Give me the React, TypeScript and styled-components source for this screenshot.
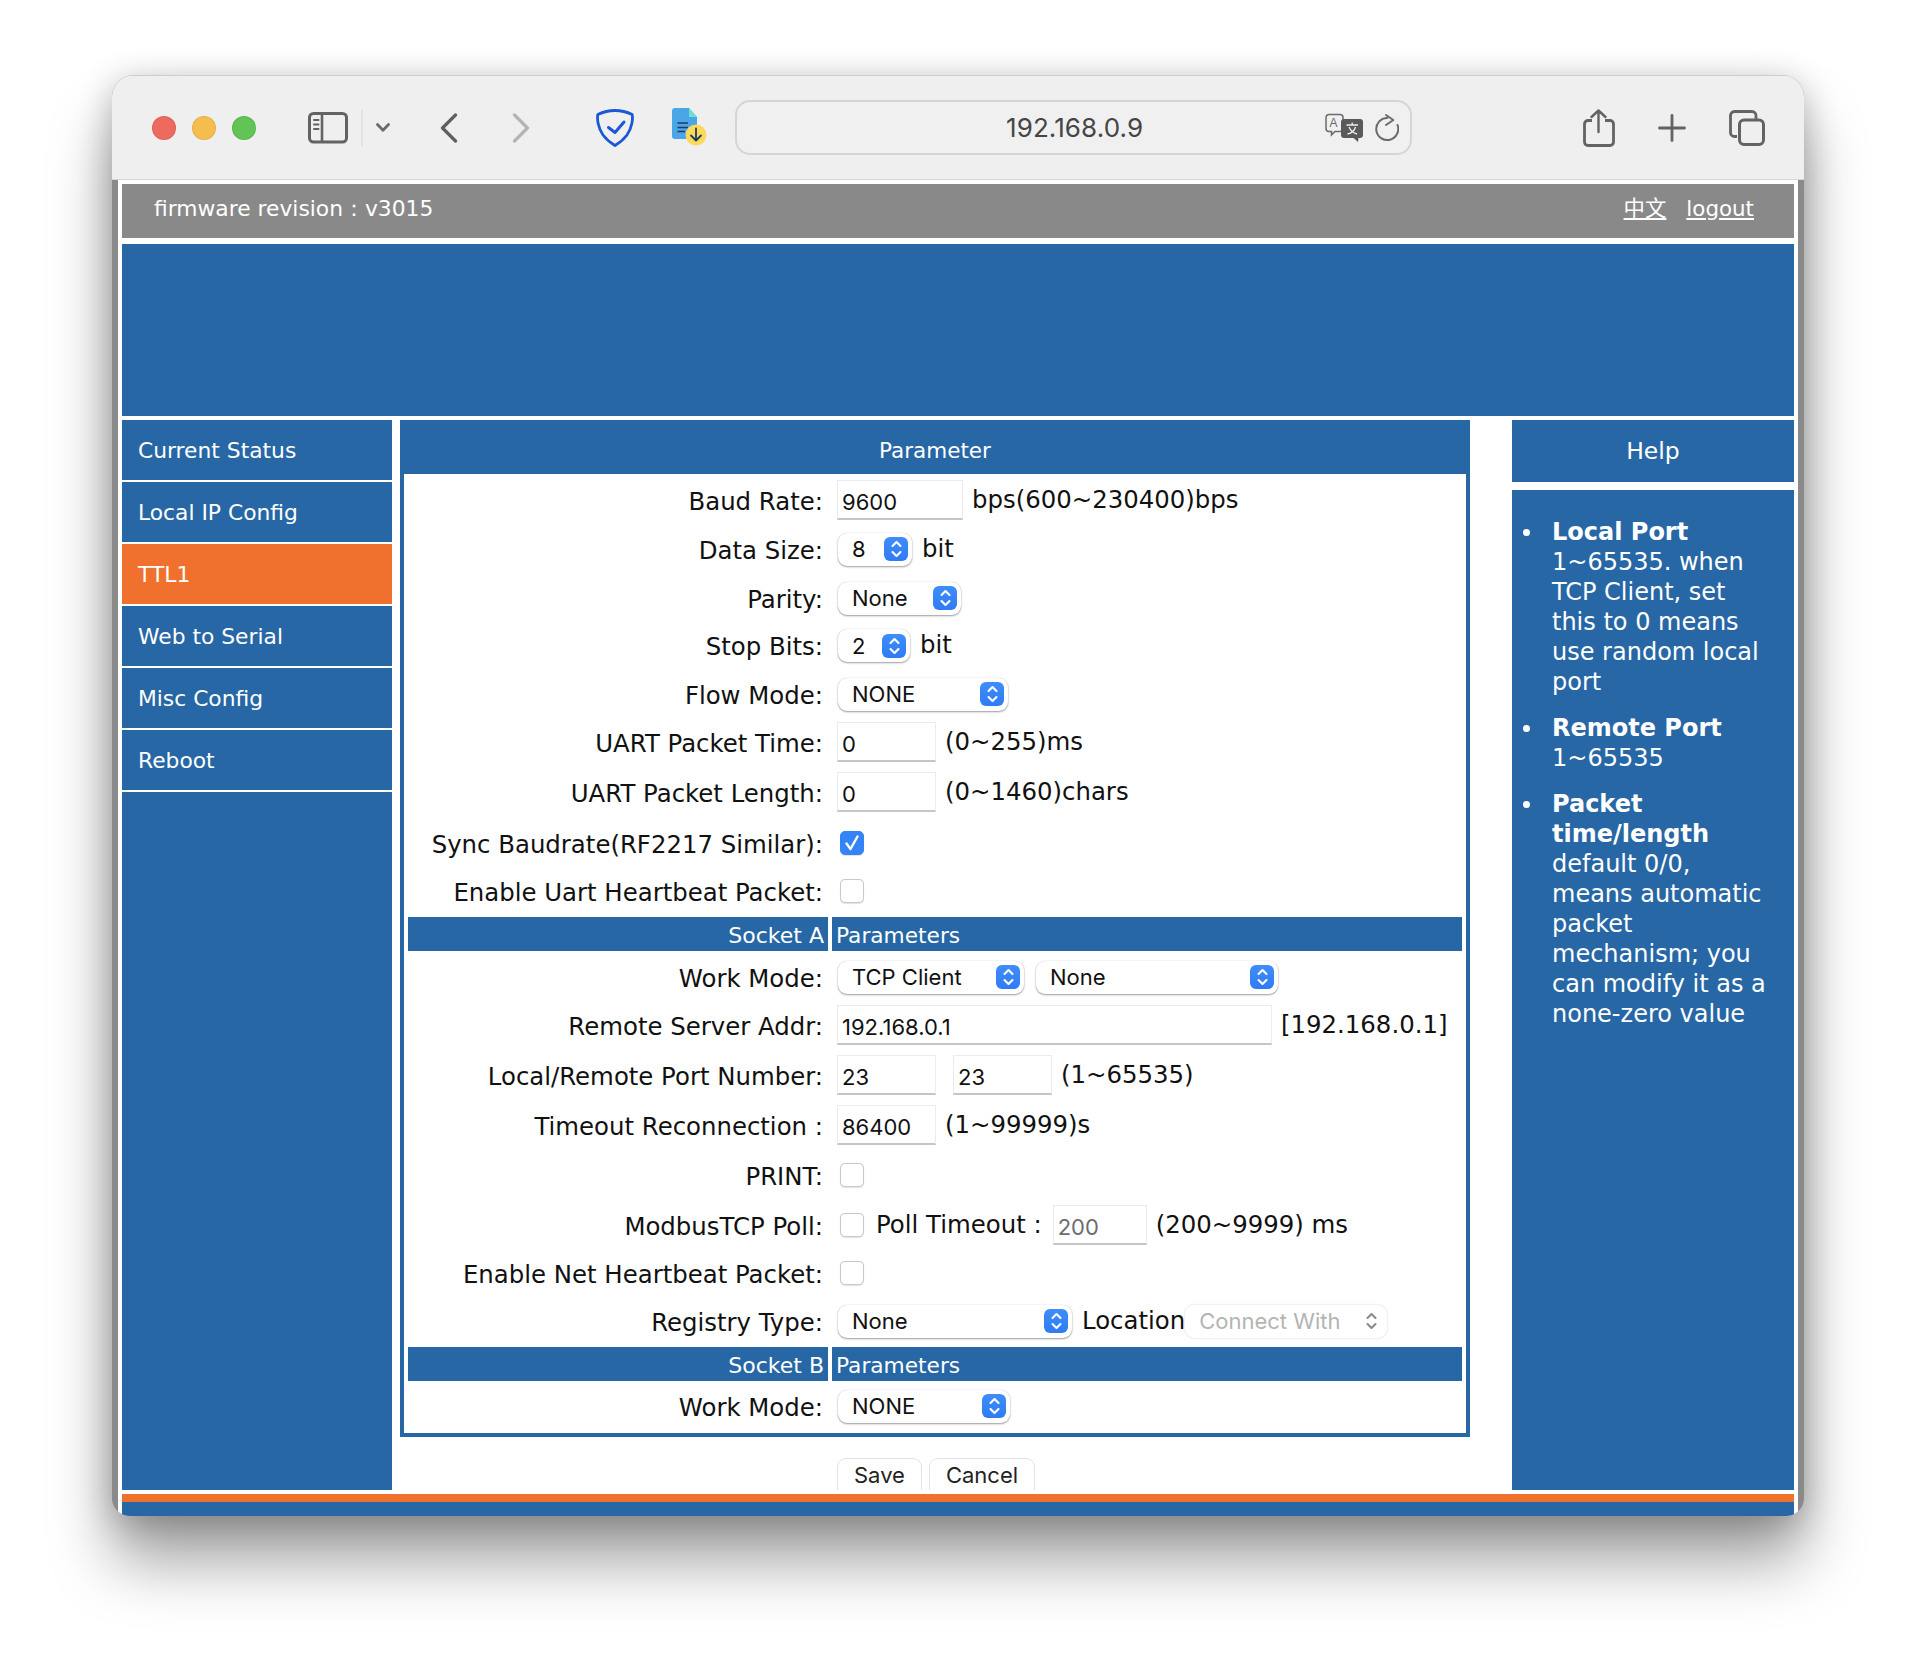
import React from "react";
import styled, { createGlobalStyle } from "styled-components";

const BLUE = "#2767a5";
const ORANGE = "#f0702d";
const FONT = `"DejaVu Sans", Verdana, sans-serif`;
const SYSTEM_FONT = `Inter, "Liberation Sans", sans-serif`;

const GlobalStyle = createGlobalStyle`
  html, body {
    margin: 0;
    background: #fff;
  }
  body {
    font-family: ${FONT};
  }
  #root {
    padding: 75px 112px 148px;
    width: 1692px;
  }
`;

const Window = styled.div`
  height: 1441px;
  border-radius: 22px 22px 18px 18px;
  overflow: hidden;
  background: #8a8a8a;
  box-shadow: 0 46px 62px rgba(0, 0, 0, 0.36), 0 6px 34px rgba(0, 0, 0, 0.24);
  display: flex;
  flex-direction: column;
`;

const Toolbar = styled.header`
  height: 105px;
  box-sizing: border-box;
  background: #efefef;
  border-top: 1px solid #cdcdcd;
  border-bottom: 1px solid #d6d6d6;
  display: flex;
  align-items: center;
  padding: 0 39px 0 40px;
  flex: none;
`;

const Lights = styled.div`
  display: flex;
  gap: 16px;
  margin-right: 52px;
`;

const Light = styled.span<{ $color: string }>`
  width: 24px;
  height: 24px;
  border-radius: 50%;
  background: ${(p) => p.$color};
  box-shadow: inset 0 0 0 1px rgba(0, 0, 0, 0.08);
`;

const ToolIcon = styled.svg<{ $gap?: number }>`
  flex: none;
  display: block;
  margin-right: ${(p) => p.$gap ?? 0}px;
`;

const ToolDivider = styled.span`
  width: 2px;
  height: 36px;
  background: #e2e2e2;
  margin: 0 13px;
`;

const UrlBar = styled.div`
  width: 677px;
  height: 55px;
  box-sizing: border-box;
  border: 2px solid #d5d5d5;
  border-radius: 15px;
  background: #f0f0f0;
  display: flex;
  align-items: center;
  padding-left: 269px;
  margin: 0 171px 0 28px;
  flex: none;
`;

const UrlText = styled.span`
  font-family: ${SYSTEM_FONT};
  font-size: 26px;
  letter-spacing: 0.1px;
  color: #454545;
  width: 180px;
  margin-right: 139px;
`;

const Frame = styled.div`
  flex: 1;
  min-height: 0;
  margin: 0 6px;
  padding: 4px 4px 0;
  background: #fff;
  display: flex;
  flex-direction: column;
`;

const TopBar = styled.div`
  height: 54px;
  box-sizing: border-box;
  flex: none;
  background: #898989;
  color: #fff;
  font-size: 21.8px;
  display: flex;
  align-items: center;
  justify-content: space-between;
  padding: 0 40px 5px 32px;
`;

const TopLinks = styled.div`
  display: flex;
  align-items: baseline;
  gap: 20px;
`;

const TopLink = styled.a`
  color: #fff;
  text-decoration: underline;
  font-family: ${FONT}, "Noto Sans CJK SC";
  font-size: 21.4px;
  line-height: 26px;
`;

const Banner = styled.div`
  height: 172px;
  flex: none;
  margin-top: 6px;
  background: ${BLUE};
`;

const Columns = styled.div`
  height: 1070px;
  flex: none;
  margin-top: 4px;
  display: flex;
`;

const Nav = styled.nav`
  width: 270px;
  flex: none;
  background: ${BLUE};
`;

const NavItem = styled.div<{ $active?: boolean }>`
  height: 60px;
  border-bottom: 2px solid #fff;
  display: flex;
  align-items: center;
  padding-left: 16px;
  color: #fff;
  font-size: 21.8px;
  background: ${(p) => (p.$active ? ORANGE : BLUE)};
`;

const Center = styled.main`
  width: 1070px;
  flex: none;
  margin: 0 42px 0 8px;
`;

const Panel = styled.section`
  height: 963px;
  box-sizing: border-box;
  border: 4px solid ${BLUE};
  border-top: 0;
`;

const PanelTitle = styled.h2`
  height: 54px;
  box-sizing: border-box;
  margin: 0;
  padding-top: 6px;
  background: ${BLUE};
  color: #fff;
  font-size: 21.5px;
  font-weight: 400;
  display: flex;
  align-items: center;
  justify-content: center;
`;

const FormGrid = styled.div`
  display: grid;
  grid-template-columns: 420px 630px;
  grid-template-rows:
    48px 50px 48px 47px 50px 46px 54px 48px 48px 2px 34px 52px 44px 56px 44px
    56px 44px 52px 44px 4px 34px 50px;
  column-gap: 4px;
  padding: 2px 4px 0;
`;

const Label = styled.div`
  font-size: 24.4px;
  color: #111;
  padding: 2px 5px 0 0;
  display: flex;
  align-items: center;
  justify-content: flex-end;
  white-space: nowrap;
`;

const Value = styled.div`
  display: flex;
  align-items: center;
  padding-left: 5px;
  font-size: 24.4px;
  color: #111;
  white-space: nowrap;
`;

const Spacer = styled.div`
  grid-column: 1 / -1;
`;

const BarLeft = styled.div`
  background: ${BLUE};
  color: #fff;
  font-size: 22px;
  display: flex;
  align-items: center;
  justify-content: flex-end;
  padding: 2px 4px 0 0;
`;

const BarRight = styled.div`
  background: ${BLUE};
  color: #fff;
  font-size: 21.7px;
  display: flex;
  align-items: center;
  padding: 2px 0 0 4px;
`;

const TextInput = styled.input<{ $w: number; $gap?: number; $dim?: boolean }>`
  width: ${(p) => p.$w}px;
  height: 40px;
  box-sizing: border-box;
  margin-left: ${(p) => p.$gap ?? 0}px;
  border: 1px solid #ececec;
  border-bottom: 2px solid #c6c6c6;
  border-radius: 0;
  outline: none;
  padding: 4px 0 0 4px;
  font-family: ${SYSTEM_FONT};
  font-size: 22px;
  color: ${(p) => (p.$dim ? "#6d6d6d" : "#111")};
  background: #fff;
  flex: none;
`;

const Note = styled.span<{ $gap?: number }>`
  margin-left: ${(p) => p.$gap ?? 9}px;
  position: relative;
  top: -1px;
`;

const SelectBox = styled.div<{ $w: number; $gap?: number; $disabled?: boolean }>`
  width: ${(p) => p.$w}px;
  height: 33px;
  box-sizing: border-box;
  margin-left: ${(p) => p.$gap ?? 1}px;
  padding: 0 4px 0 14px;
  border-radius: 9px;
  background: #fff;
  box-shadow: ${(p) =>
    p.$disabled
      ? "0 0 2px rgba(0, 0, 0, 0.22)"
      : "0 1px 2px rgba(0, 0, 0, 0.38), 0 0 1px rgba(0, 0, 0, 0.22)"};
  display: flex;
  align-items: center;
  justify-content: space-between;
  font-family: ${SYSTEM_FONT};
  font-size: 22px;
  color: ${(p) => (p.$disabled ? "#b4b4b4" : "#111")};
  flex: none;
`;

const Stepper = styled.span<{ $disabled?: boolean }>`
  width: 24px;
  height: 24px;
  border-radius: 6px;
  background: ${(p) =>
    p.$disabled ? "#fff" : "linear-gradient(#3f8dfa, #2f7bf5)"};
  display: flex;
  align-items: center;
  justify-content: center;
`;

const Check = styled.span<{ $on?: boolean }>`
  width: 24px;
  height: 24px;
  box-sizing: border-box;
  margin-left: 3px;
  border-radius: 5px;
  border: 1px solid ${(p) => (p.$on ? "#3584f7" : "#c9c9c9")};
  background: ${(p) => (p.$on ? "#3584f7" : "#fff")};
  box-shadow: 0 0.5px 1px rgba(0, 0, 0, 0.12);
  display: flex;
  align-items: center;
  justify-content: center;
  flex: none;
`;

const Actions = styled.div`
  display: flex;
  gap: 7px;
  margin: 21px 0 0 437px;
`;

const ActionButton = styled.button`
  height: 32px;
  box-sizing: border-box;
  padding: 0 16px;
  border: 1px solid #e3e3e3;
  border-bottom: 0;
  border-radius: 9px 9px 0 0;
  background: #fff;
  font-family: ${SYSTEM_FONT};
  font-size: 22px;
  color: #222;
`;

const Help = styled.aside`
  width: 282px;
  flex: none;
  display: flex;
  flex-direction: column;
`;

const HelpTitle = styled.h2`
  height: 62px;
  flex: none;
  margin: 0 0 8px;
  background: ${BLUE};
  color: #fff;
  font-size: 23.5px;
  font-weight: 400;
  display: flex;
  align-items: center;
  justify-content: center;
`;

const HelpBody = styled.ul`
  flex: 1;
  margin: 0;
  padding: 27px 24px 0 40px;
  list-style: none;
  background: ${BLUE};
  color: #fff;
  font-size: 24px;
  line-height: 30px;
`;

const HelpItem = styled.li`
  position: relative;
  margin-bottom: 16px;

  &::before {
    content: "";
    position: absolute;
    left: -29px;
    top: 12px;
    width: 7px;
    height: 7px;
    border-radius: 50%;
    background: #fff;
  }
`;

const Footer = styled.div`
  flex: none;
  margin-top: 4px;
  height: 22px;
  background: ${BLUE};
  border-top: 8px solid ${ORANGE};
  box-sizing: border-box;
`;

const SidebarIcon = () => (
  <ToolIcon width="40" height="32" viewBox="0 0 40 32" fill="none">
    <rect x="1.5" y="1.5" width="37" height="28.5" rx="4" stroke="#636363" strokeWidth="3" />
    <path d="M14 2v28" stroke="#636363" strokeWidth="2.6" />
    <path d="M6 8h4.5M6 12.5h4.5M6 17h4.5" stroke="#636363" strokeWidth="2" strokeLinecap="round" />
  </ToolIcon>
);

const SmallChevron = () => (
  <ToolIcon width="14" height="9" viewBox="0 0 14 9" fill="none" $gap={50}>
    <path d="M1.5 1.5 7 7.2l5.5-5.7" stroke="#6a6a6a" strokeWidth="2.8" strokeLinecap="round" strokeLinejoin="round" />
  </ToolIcon>
);

const Arrow = ({ dir, color, gap }: { dir: "back" | "forward"; color: string; gap: number }) => (
  <ToolIcon width="18" height="30" viewBox="0 0 18 30" fill="none" $gap={gap}>
    <path
      d={dir === "back" ? "M15.5 2 2.5 15l13 13" : "M2.5 2l13 13-13 13"}
      stroke={color}
      strokeWidth="3.2"
      strokeLinecap="round"
      strokeLinejoin="round"
    />
  </ToolIcon>
);

const ShieldIcon = () => (
  <ToolIcon width="38" height="38" viewBox="0 0 38 38" fill="none" $gap={38}>
    <path
      d="M19 1.5C13 1.5 7 3 1.800 5.500 1 10 2 19 7 26c3 4 7 7.500 12 10.500 5-3 9-6.500 12-10.500 5-7 6-16 5.200-20.500C31 3 25 1.500 19 1.500Z"
      stroke="#1a58d8"
      strokeWidth="2.8"
      strokeLinejoin="round"
    />
    <path d="M12.5 18.5 19 23.5 28 13" stroke="#1a58d8" strokeWidth="3" strokeLinecap="round" strokeLinejoin="round" />
  </ToolIcon>
);

const FileIcon = () => (
  <ToolIcon width="35" height="39" viewBox="0 0 35 39" fill="none">
    <path d="M3 0h14l8 9v19a3 3 0 0 1-3 3H3a3 3 0 0 1-3-3V3a3 3 0 0 1 3-3Z" fill="#4aa6e6" />
    <path d="M17 0l8 9h-8Z" fill="#6fe0cf" />
    <path d="M5.5 15H16M5.500 19.500H16M5.500 23.500H13" stroke="#1d3b63" strokeWidth="1.7" />
    <circle cx="24" cy="27" r="10.5" fill="#fbd95a" />
    <path d="M24 20.5v12m-5-5 5 5 5-5" stroke="#1d3b63" strokeWidth="1.8" strokeLinecap="round" strokeLinejoin="round" />
  </ToolIcon>
);

const TranslateIcon = () => (
  <ToolIcon width="39" height="29" viewBox="0 0 39 29" fill="none" $gap={11}>
    <path
      d="M4 1.5h11a3 3 0 0 1 3 3v11a3 3 0 0 1-3 3H10l-3.500 3.500V18.500H4a3 3 0 0 1-3-3v-11a3 3 0 0 1 3-3Z"
      fill="#f0f0f0"
      stroke="#6b6b6b"
      strokeWidth="1.5"
    />
    <text x="4.5" y="14" fontSize="12" fill="#6b6b6b" fontFamily="Liberation Sans">A</text>
    <path
      d="M19 6h16a3 3 0 0 1 3 3v13a3 3 0 0 1-3 3h-1.500l-.5 4-4.500-4H19a3 3 0 0 1-3-3V9a3 3 0 0 1 3-3Z"
      fill="#5a5a5a"
    />
    <path d="M21.5 12H33M27.200 9.500V12M24 14c1.500 3.500 4 6 8 7M30.500 14c-1 3.500-3.500 6-8 7" stroke="#f0f0f0" strokeWidth="1.3" />
  </ToolIcon>
);

const ReloadIcon = () => (
  <ToolIcon width="24" height="27" viewBox="0 0 24 27" fill="none">
    <path d="M12.3 4A11 11 0 1 0 22.5 11" stroke="#6b6b6b" strokeWidth="2" strokeLinecap="round" />
    <path d="M11 1l7.300 5L11 11" stroke="#6b6b6b" strokeWidth="2" strokeLinecap="round" strokeLinejoin="round" />
  </ToolIcon>
);

const ShareIcon = () => (
  <ToolIcon width="32" height="38" viewBox="0 0 32 38" fill="none" $gap={43}>
    <path d="M9 11.5H5A3.500 3.500 0 0 0 1.500 15v18A3.500 3.500 0 0 0 5 36.500h22a3.500 3.500 0 0 0 3.500-3.500V15a3.500 3.500 0 0 0-3.500-3.500h-5" stroke="#636363" strokeWidth="2.8" />
    <path d="M15.5 23V2M8.500 8l7-6.500 7 6.500" stroke="#636363" strokeWidth="2.4" strokeLinecap="round" strokeLinejoin="round" />
  </ToolIcon>
);

const PlusIcon = () => (
  <ToolIcon width="28" height="28" viewBox="0 0 28 28" fill="none" $gap={43}>
    <path d="M14 1.5v25M1.500 14h25" stroke="#636363" strokeWidth="2.8" strokeLinecap="round" />
  </ToolIcon>
);

const TabsIcon = () => (
  <ToolIcon width="36" height="36" viewBox="0 0 36 36" fill="none">
    <path d="M8 26.5H5.500a4 4 0 0 1-4-4V5.500a4 4 0 0 1 4-4H23a4 4 0 0 1 4 4V9" stroke="#636363" strokeWidth="2.8" />
    <rect x="10.5" y="10" width="24" height="24.5" rx="4.5" stroke="#636363" strokeWidth="3" />
  </ToolIcon>
);

const StepperGlyph = ({ color }: { color: string }) => (
  <svg width="11" height="18" viewBox="0 0 11 18" fill="none">
    <path d="M1.5 6 5.500 2l4 4M1.500 12l4 4 4-4" stroke={color} strokeWidth="2.1" strokeLinecap="round" strokeLinejoin="round" />
  </svg>
);

const Select = ({ value, width, gap, disabled }: { value: string; width: number; gap?: number; disabled?: boolean }) => (
  <SelectBox $w={width} $gap={gap} $disabled={disabled}>
    {value}
    <Stepper $disabled={disabled}>
      <StepperGlyph color={disabled ? "#8a8a8a" : "#fff"} />
    </Stepper>
  </SelectBox>
);

const CheckBox = ({ on }: { on?: boolean }) => (
  <Check $on={on}>
    {on && (
      <svg width="18" height="18" viewBox="0 0 18 18" fill="none">
        <path d="M3.5 9.5 7.500 15 14.500 2.500" stroke="#fff" strokeWidth="2.4" strokeLinecap="round" strokeLinejoin="round" />
      </svg>
    )}
  </Check>
);

const Input = ({ value, width, gap, dim }: { value: string; width: number; gap?: number; dim?: boolean }) => (
  <TextInput $w={width} $gap={gap} $dim={dim} defaultValue={value} readOnly />
);

const NAV = ["Current Status", "Local IP Config", "TTL1", "Web to Serial", "Misc Config", "Reboot"];

export default function App() {
  return (
    <>
      <GlobalStyle />
      <Window>
        <Toolbar>
          <Lights>
            <Light $color="#ee6a5f" />
            <Light $color="#f5bd4f" />
            <Light $color="#61c454" />
          </Lights>
          <SidebarIcon />
          <ToolDivider />
          <SmallChevron />
          <Arrow dir="back" color="#5f5f5f" gap={54} />
          <Arrow dir="forward" color="#b4b4b4" gap={66} />
          <ShieldIcon />
          <FileIcon />
          <UrlBar>
            <UrlText>192.168.0.9</UrlText>
            <TranslateIcon />
            <ReloadIcon />
          </UrlBar>
          <ShareIcon />
          <PlusIcon />
          <TabsIcon />
        </Toolbar>
        <Frame>
          <TopBar>
            <span>firmware revision：v3015</span>
            <TopLinks>
              <TopLink>中文</TopLink>
              <TopLink>logout</TopLink>
            </TopLinks>
          </TopBar>
          <Banner />
          <Columns>
            <Nav>
              {NAV.map((item) => (
                <NavItem key={item} $active={item === "TTL1"}>
                  {item}
                </NavItem>
              ))}
            </Nav>
            <Center>
              <PanelTitle>Parameter</PanelTitle>
              <Panel>
                <FormGrid>
                  <Label>Baud Rate:</Label>
                  <Value>
                    <Input value="9600" width={126} />
                    <Note>bps(600~230400)bps</Note>
                  </Value>
                  <Label>Data Size:</Label>
                  <Value>
                    <Select value="8" width={74} />
                    <Note $gap={10}>bit</Note>
                  </Value>
                  <Label>Parity:</Label>
                  <Value>
                    <Select value="None" width={123} />
                  </Value>
                  <Label>Stop Bits:</Label>
                  <Value>
                    <Select value="2" width={72} />
                    <Note $gap={10}>bit</Note>
                  </Value>
                  <Label>Flow Mode:</Label>
                  <Value>
                    <Select value="NONE" width={170} />
                  </Value>
                  <Label>UART Packet Time:</Label>
                  <Value>
                    <Input value="0" width={99} />
                    <Note>(0~255)ms</Note>
                  </Value>
                  <Label>UART Packet Length:</Label>
                  <Value>
                    <Input value="0" width={99} />
                    <Note>(0~1460)chars</Note>
                  </Value>
                  <Label>Sync Baudrate(RF2217 Similar):</Label>
                  <Value>
                    <CheckBox on />
                  </Value>
                  <Label>Enable Uart Heartbeat Packet:</Label>
                  <Value>
                    <CheckBox />
                  </Value>
                  <Spacer />
                  <BarLeft>Socket A</BarLeft>
                  <BarRight>Parameters</BarRight>
                  <Label>Work Mode:</Label>
                  <Value>
                    <Select value="TCP Client" width={186} />
                    <Select value="None" width={242} gap={12} />
                  </Value>
                  <Label>Remote Server Addr:</Label>
                  <Value>
                    <Input value="192.168.0.1" width={435} />
                    <Note>[192.168.0.1]</Note>
                  </Value>
                  <Label>Local/Remote Port Number:</Label>
                  <Value>
                    <Input value="23" width={99} />
                    <Input value="23" width={99} gap={17} />
                    <Note>(1~65535)</Note>
                  </Value>
                  <Label>Timeout Reconnection :</Label>
                  <Value>
                    <Input value="86400" width={99} />
                    <Note>(1~99999)s</Note>
                  </Value>
                  <Label>PRINT:</Label>
                  <Value>
                    <CheckBox />
                  </Value>
                  <Label>ModbusTCP Poll:</Label>
                  <Value>
                    <CheckBox />
                    <Note $gap={12}>Poll Timeout :</Note>
                    <Input value="200" width={94} gap={11} dim />
                    <Note>(200~9999) ms</Note>
                  </Value>
                  <Label>Enable Net Heartbeat Packet:</Label>
                  <Value>
                    <CheckBox />
                  </Value>
                  <Label>Registry Type:</Label>
                  <Value>
                    <Select value="None" width={234} />
                    <Note $gap={10}>Location</Note>
                    <Select value="Connect With" width={202} gap={0} disabled />
                  </Value>
                  <Spacer />
                  <BarLeft>Socket B</BarLeft>
                  <BarRight>Parameters</BarRight>
                  <Label>Work Mode:</Label>
                  <Value>
                    <Select value="NONE" width={172} />
                  </Value>
                </FormGrid>
              </Panel>
              <Actions>
                <ActionButton>Save</ActionButton>
                <ActionButton>Cancel</ActionButton>
              </Actions>
            </Center>
            <Help>
              <HelpTitle>Help</HelpTitle>
              <HelpBody>
                <HelpItem>
                  <b>Local Port</b>
                  <br />
                  1~65535. when TCP Client, set this to 0 means use random local port
                </HelpItem>
                <HelpItem>
                  <b>Remote Port</b>
                  <br />
                  1~65535
                </HelpItem>
                <HelpItem>
                  <b>Packet time/length</b>
                  <br />
                  default 0/0, means automatic packet mechanism; you can modify it as a none-zero value
                </HelpItem>
              </HelpBody>
            </Help>
          </Columns>
          <Footer />
        </Frame>
      </Window>
    </>
  );
}
